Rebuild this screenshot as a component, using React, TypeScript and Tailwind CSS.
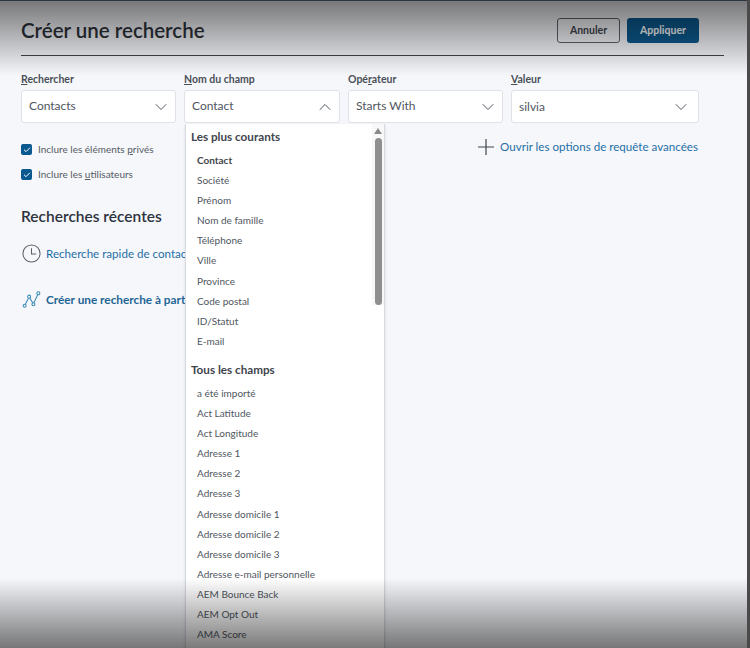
import { ChevronDown, ChevronUp, Check } from "lucide-react";

const popular = ["Société", "Prénom", "Nom de famille", "Téléphone", "Ville", "Province", "Code postal", "ID/Statut", "E-mail"];
const allFields = [
    "a été importé",
    "Act Latitude",
    "Act Longitude",
    "Adresse 1",
    "Adresse 2",
    "Adresse 3",
    "Adresse domicile 1",
    "Adresse domicile 2",
    "Adresse domicile 3",
    "Adresse e-mail personnelle",
    "AEM Bounce Back",
    "AEM Opt Out",
    "AMA Score",
];

function Field({ label, u, rest, value, width, open, pad = "pr-[4px]", lift = "pb-[2px]" }: { label?: string; u: string; rest: string; value: string; width: string; open?: boolean; pad?: string; lift?: string }) {
    return (
        <div className={`flex flex-col ${width}`}>
            <label className="h-[19px] text-[10.5px] leading-[17px] font-bold text-[#4a4f57]">
                {label}
                <span className="underline">{u}</span>
                {rest}
            </label>
            <div className={`flex h-[33px] items-center justify-between rounded-[3px] border border-[#dfe2e8] bg-white pl-[7px] text-[12px] text-[#4f5660] ${pad}`}>
                <span className={lift}>{value}</span>
                {open ? (
                    <ChevronUp className="h-[20px] w-[20px] text-[#4f5660]" strokeWidth={1.2} />
                ) : (
                    <ChevronDown className="h-[20px] w-[20px] text-[#4f5660]" strokeWidth={1.2} />
                )}
            </div>
        </div>
    );
}

function Checkbox({ before, u, after }: { before: string; u: string; after: string }) {
    return (
        <div className="flex h-[25px] items-center gap-[6px] text-[10px] text-[#555b63]">
            <span className="flex h-[11px] w-[11px] items-center justify-center rounded-[2px] bg-[#0b5a8f]">
                <Check className="h-[8px] w-[8px] text-white" strokeWidth={3} />
            </span>
            <span>
                {before}
                <span className="underline">{u}</span>
                {after}
            </span>
        </div>
    );
}

export default function App() {
    return (
        <div className="relative h-[648px] w-[750px] overflow-hidden bg-[#f6f7fb] font-['Lato',sans-serif]">
            <div className="pt-[14px] pr-[26px] pl-[21px]">
                <div className="flex h-[42px] items-start justify-between border-b border-[#3f454d] pr-[25px]">
                    <h1 className="text-[20.5px] leading-[32px] font-semibold text-[#2d333b]">Créer une recherche</h1>
                    <div className="mt-[4px] flex gap-[7px]">
                        <button className="h-[25px] w-[63px] rounded-[3px] border border-[#5d636b] text-[10.5px] font-bold text-[#3f454d]">Annuler</button>
                        <button className="h-[25px] w-[72px] rounded-[3px] bg-[#0b5a8f] text-[10.5px] font-bold text-white">Appliquer</button>
                    </div>
                </div>

                <div className="mt-[15px] flex gap-[8px]">
                    <Field u="R" rest="echercher" value="Contacts" width="w-[155px]" />
                    <Field u="N" rest="om du champ" value="Contact" width="w-[156px]" open />
                    <Field label="Opé" u="r" rest="ateur" value="Starts With" width="w-[155px]" />
                    <Field u="V" rest="aleur" value="silvia" width="w-[188px]" pad="pr-[7px]" lift="pb-0" />
                </div>

                <div className="mt-[14px] flex items-start justify-between pr-[26px]">
                    <div>
                        <Checkbox before="Inclure les éléments " u="p" after="rivés" />
                        <Checkbox before="Inclure les " u="u" after="tilisateurs" />
                    </div>
                    <div className="mt-[1px] flex h-[18px] items-center gap-[6px] text-[11.6px] text-[#1f6fa5]">
                        <svg className="h-[16px] w-[16px]" viewBox="0 0 16 16" fill="none" stroke="#3f454d" strokeWidth="1.2">
                            <path d="M8 0V16M0 8H16" />
                        </svg>
                        <span>Ouvrir les options de requête avancées</span>
                    </div>
                </div>

                <h2 className="mt-[18px] text-[15.5px] leading-[22px] font-semibold text-[#2d333b]">Recherches récentes</h2>

                <div className="mt-[17px] ml-[1px] flex w-[163px] items-center gap-[5px] overflow-hidden text-[11.6px] whitespace-nowrap text-[#1f6fa5]">
                    <svg className="h-[19px] w-[19px] shrink-0" viewBox="0 0 20 20" fill="none" stroke="#5d636b" strokeWidth="1.1">
                        <circle cx="10" cy="10" r="9" />
                        <path d="M10 4.5V10.5H15" />
                    </svg>
                    <span>Recherche rapide de contacts</span>
                </div>

                <div className="mt-[27px] ml-[1px] flex w-[163px] items-center gap-[5px] overflow-hidden text-[11.8px] font-bold whitespace-nowrap text-[#1f6594]">
                    <svg className="h-[19px] w-[19px] shrink-0" viewBox="0 0 20 20" fill="none" stroke="#3b8bb5" strokeWidth="1.1">
                        <path d="M3 16L7.5 7.5L12 14.5L17 4" />
                        <circle cx="2.8" cy="16.5" r="1.6" fill="#f6f7fb" />
                        <circle cx="7.5" cy="7" r="1.6" fill="#f6f7fb" />
                        <circle cx="12" cy="15" r="1.6" fill="#f6f7fb" />
                        <circle cx="17.2" cy="3.5" r="1.6" fill="#f6f7fb" />
                    </svg>
                    <span>Créer une recherche à partir de zéro</span>
                </div>
            </div>

            {/* field dropdown, lies over the page */}
            <div className="absolute top-[124px] left-[185px] h-[530px] w-[200px] overflow-hidden border-x border-[#d5d9e2] bg-white shadow-sm">
                <div className="absolute top-0 right-0 flex w-[12px] flex-col items-center bg-[#f8f8f8] pt-[4px]">
                    <svg className="h-[6px] w-[8px]" viewBox="0 0 8 6" fill="#8a8a8a">
                        <path d="M4 0L8 6H0Z" />
                    </svg>
                    <div className="mt-[4px] h-[167px] w-[7px] rounded-[4px] bg-[#8f8f8f]" />
                </div>
                <div className="pt-[4px] pl-[5px] text-[#4f5660]">
                    <div className="text-[11.7px] leading-[17px] font-bold text-[#3f454d]">Les plus courants</div>
                    <div className="mt-[5px] pl-[6px] text-[10px]">
                        <div className="h-[20.1px] leading-[20px] font-bold text-[#3f454d]">Contact</div>
                        {popular.map((name) => (
                            <div key={name} className="h-[20.1px] leading-[20px]">
                                {name}
                            </div>
                        ))}
                    </div>
                    <div className="mt-[10px] text-[11.7px] leading-[17px] font-bold text-[#3f454d]">Tous les champs</div>
                    <div className="mt-[5px] pl-[6px] text-[10px]">
                        {allFields.map((name) => (
                            <div key={name} className="h-[20.1px] leading-[20px]">
                                {name}
                            </div>
                        ))}
                    </div>
                </div>
            </div>

            {/* dimmed top and bottom edges of the capture, dark frame at top and right */}
            <div className="pointer-events-none absolute inset-x-0 top-0 h-[76px] bg-gradient-to-b from-[#00000085] to-transparent" />
            <div className="pointer-events-none absolute inset-x-0 bottom-0 h-[70px] bg-gradient-to-t from-[#00000085] to-transparent" />
            <div className="absolute inset-x-0 top-0 h-px bg-[#2b3640]" />
            <div className="absolute inset-y-0 right-0 w-[3px] bg-[#4a4a4a]" />
        </div>
    );
}
